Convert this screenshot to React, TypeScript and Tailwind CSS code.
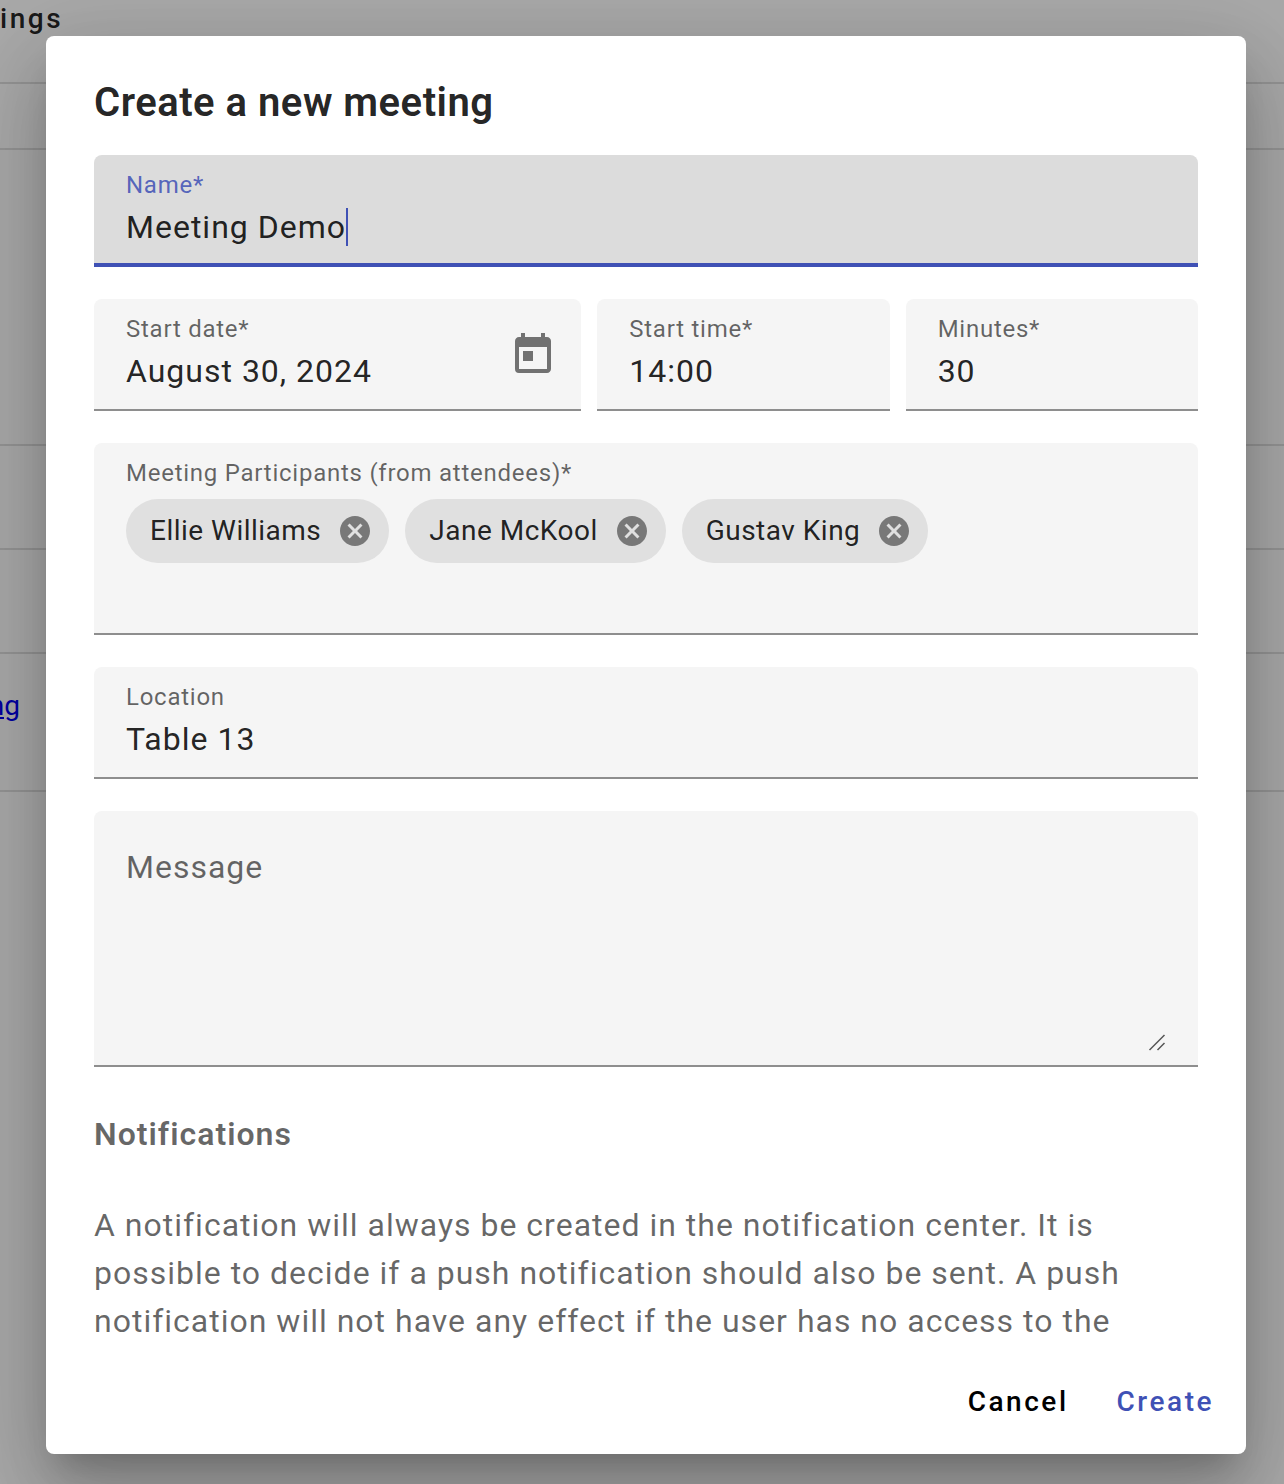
import React from "react";
import { MdCancel, MdToday } from "react-icons/md";

type fieldProps = {
  id: string;
  label: string;
  value: string;
  children?: React.ReactNode;
};

const participants = ["Ellie Williams", "Jane McKool", "Gustav King"];

const TextField = ({ id, label, value, children }: fieldProps) => {
  return (
    <div className="flex min-w-0 items-start rounded-t-lg border-b-2 border-[#8e8e8e] bg-[#f5f5f5] pt-3 pr-6 pb-[14px] pl-8">
      <div className="min-w-0 flex-1">
        <label
          htmlFor={id}
          className="block text-[24px] leading-9 tracking-[0.03125em] text-black/60"
        >
          {label}
        </label>
        <input
          id={id}
          type="text"
          defaultValue={value}
          className="block h-12 w-full bg-transparent text-[32px] tracking-[0.03125em] outline-none"
        />
      </div>
      {children}
    </div>
  );
};

const Chip = ({ name }: { name: string }) => {
  return (
    <div className="flex h-16 items-center gap-4 rounded-full bg-[#e0e0e0] pr-4 pl-6">
      <span className="text-[28px] leading-10 tracking-[0.0175em]">{name}</span>
      <button type="button" aria-label={"Remove " + name}>
        <MdCancel className="size-9 text-[#787878]" />
      </button>
    </div>
  );
};

// Meeting table behind the dialog
const MeetingTable = () => {
  return (
    <div className="absolute inset-0 overflow-hidden bg-[#fafafa]">
      <div className="h-[84px] border-b-2 border-black/12">
        <div className="text-[28px] leading-[38px] font-medium tracking-[0.09em]">
          ings
        </div>
      </div>
      <div className="h-[66px] border-b-2 border-black/12" />
      <div className="h-[296px] border-b-2 border-black/12" />
      <div className="h-[104px] border-b-2 border-black/12" />
      <div className="h-[104px] border-b-2 border-black/12" />
      <div className="h-[138px] border-b-2 border-black/12 pt-8">
        <div className="flex w-5 justify-end text-[28px] leading-10">
          <a href="#" className="text-[#0000ee] underline">
            ng
          </a>
        </div>
      </div>
    </div>
  );
};

const App = () => {
  return (
    <div className="relative min-h-screen font-['Roboto',sans-serif] text-black/87">
      <MeetingTable />
      <div className="relative min-h-screen overflow-hidden bg-black/32 pt-9 pr-[38px] pb-[30px] pl-[46px]">
        <form
          role="dialog"
          aria-labelledby="dialog-title"
          className="rounded-lg bg-white shadow-[0_22px_30px_-14px_rgba(0,0,0,0.2),0_48px_76px_6px_rgba(0,0,0,0.14),0_18px_92px_16px_rgba(0,0,0,0.12)]"
        >
          <h2
            id="dialog-title"
            className="px-12 pt-9 text-[40px] leading-[62px] font-semibold tracking-[0.0125em]"
          >
            Create a new meeting
          </h2>

          <div className="flex flex-col gap-8 px-12 pt-[21px]">
            {/* Focused field */}
            <div className="rounded-t-lg border-b-4 border-[#3f51b5] bg-[#dcdcdc] px-8 pt-3 pb-3">
              <label
                htmlFor="name"
                className="block text-[24px] leading-9 tracking-[0.03125em] text-[#3f51b5]/87"
              >
                Name*
              </label>
              <div className="flex h-12 items-center">
                <input
                  id="name"
                  type="text"
                  defaultValue="Meeting Demo"
                  className="field-sizing-content h-12 bg-transparent text-[32px] tracking-[0.03125em] caret-transparent outline-none"
                />
                <span className="h-[38px] w-0.5 bg-[#3f51b5]" />
              </div>
            </div>

            <div className="grid grid-cols-[5fr_3fr_3fr] gap-4">
              <TextField id="date" label="Start date*" value="August 30, 2024">
                <button
                  type="button"
                  aria-label="Open calendar"
                  className="mt-5"
                >
                  <MdToday className="size-12 text-[#717171]" />
                </button>
              </TextField>
              <TextField id="time" label="Start time*" value="14:00" />
              <TextField id="minutes" label="Minutes*" value="30" />
            </div>

            <div className="rounded-t-lg border-b-2 border-[#8e8e8e] bg-[#f5f5f5] px-8 pt-3 pb-[14px]">
              <label
                htmlFor="participants"
                className="block text-[24px] leading-9 tracking-[0.03125em] text-black/60"
              >
                Meeting Participants (from attendees)*
              </label>
              <div className="flex flex-wrap gap-4 py-2">
                {participants.map((name) => (
                  <Chip key={name} name={name} />
                ))}
              </div>
              <input
                id="participants"
                type="text"
                className="block h-12 w-full bg-transparent text-[32px] outline-none"
              />
            </div>

            <TextField id="location" label="Location" value="Table 13" />

            <div className="relative rounded-t-lg border-b-2 border-[#8e8e8e] bg-[#f5f5f5] px-8 pt-8 pb-[14px]">
              <textarea
                aria-label="Message"
                placeholder="Message"
                className="block h-[208px] w-full resize-none bg-transparent text-[32px] leading-12 tracking-[0.03125em] outline-none placeholder:text-black/60"
              />
              <svg
                className="absolute right-8 bottom-[14px] size-[18px]"
                viewBox="0 0 18 18"
                fill="none"
                stroke="#555"
                strokeWidth="1.5"
              >
                <path d="M1.5 17 16.5 2M9.5 17l7-7" />
              </svg>
            </div>
          </div>

          <div className="px-12 pt-[43px] pb-[5px] text-[32px] leading-12 tracking-[0.03125em] text-black/60">
            <h3 className="font-semibold">Notifications</h3>
            <p className="pt-[43px]">
              A notification will always be created in the notification center.
              It is possible to decide if a push notification should also be
              sent. A push notification will not have any effect if the user has
              no access to the
            </p>
          </div>

          <div className="flex justify-end gap-4 p-4 text-[28px] font-medium tracking-[0.09em]">
            <button type="button" className="h-[72px] px-4 text-black">
              Cancel
            </button>
            <button type="submit" className="h-[72px] px-4 text-[#3f51b5]">
              Create
            </button>
          </div>
        </form>
      </div>
    </div>
  );
};

export default App;
